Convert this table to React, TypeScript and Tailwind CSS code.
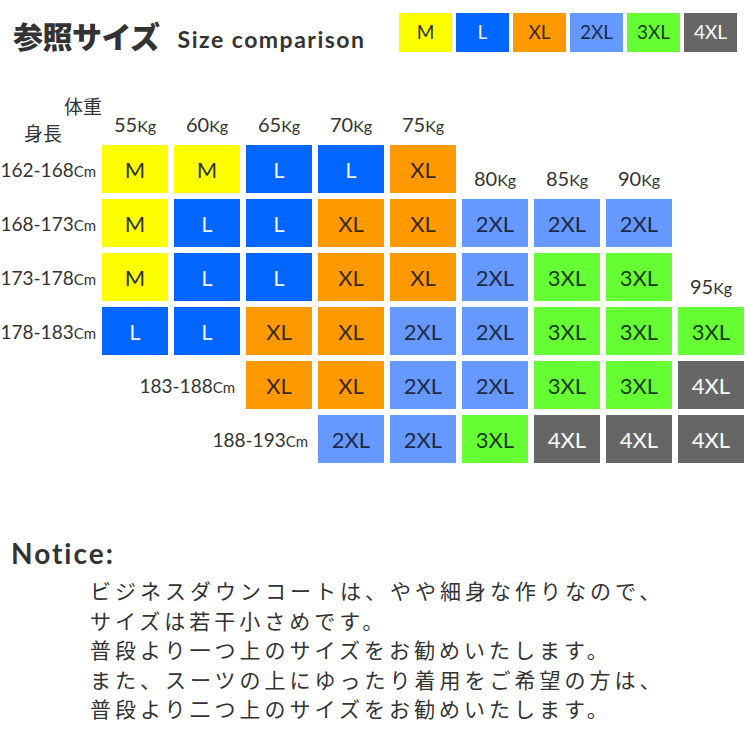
import React from 'react';

type Row = {
  label: string;
  labelCol: string;
  cells: string[];
  cellStart: number;
};

const SIZE_STYLE: Record<string, string> = {
  M: 'bg-[#ffff00] text-[#333333]',
  L: 'bg-[#0066ff] text-[#eef3ff]',
  XL: 'bg-[#ff9900] text-[#3a2a12]',
  '2XL': 'bg-[#6699ff] text-[#1e2a48]',
  '3XL': 'bg-[#66ff33] text-[#1c3a18]',
  '4XL': 'bg-[#666666] text-white',
};

// full class names so tailwind picks them up
const COL_START: Record<number, string> = {
  1: 'col-start-1',
  2: 'col-start-2',
  3: 'col-start-3',
  4: 'col-start-4',
  5: 'col-start-5',
  6: 'col-start-6',
  7: 'col-start-7',
  8: 'col-start-8',
  9: 'col-start-9',
  10: 'col-start-10',
};

const ROW_START: Record<number, string> = {
  1: 'row-start-1',
  2: 'row-start-2',
  3: 'row-start-3',
  4: 'row-start-4',
  5: 'row-start-5',
  6: 'row-start-6',
  7: 'row-start-7',
};

const rows: Row[] = [
  { label: '162-168', labelCol: 'col-start-1 col-span-1', cellStart: 2, cells: ['M', 'M', 'L', 'L', 'XL'] },
  { label: '168-173', labelCol: 'col-start-1 col-span-1', cellStart: 2, cells: ['M', 'L', 'L', 'XL', 'XL', '2XL', '2XL', '2XL'] },
  { label: '173-178', labelCol: 'col-start-1 col-span-1', cellStart: 2, cells: ['M', 'L', 'L', 'XL', 'XL', '2XL', '3XL', '3XL'] },
  { label: '178-183', labelCol: 'col-start-1 col-span-1', cellStart: 2, cells: ['L', 'L', 'XL', 'XL', '2XL', '2XL', '3XL', '3XL', '3XL'] },
  { label: '183-188', labelCol: 'col-start-1 col-span-3 pr-[5px]', cellStart: 4, cells: ['XL', 'XL', '2XL', '2XL', '3XL', '3XL', '4XL'] },
  { label: '188-193', labelCol: 'col-start-1 col-span-4 pr-[4px]', cellStart: 5, cells: ['2XL', '2XL', '3XL', '4XL', '4XL', '4XL'] },
];

// weight labels: [text, col, row]
const weights: [string, number, number][] = [
  ['55', 2, 1],
  ['60', 3, 1],
  ['65', 4, 1],
  ['70', 5, 1],
  ['75', 6, 1],
  ['80', 7, 2],
  ['85', 8, 2],
  ['90', 9, 2],
  ['95', 10, 4],
];

const legend = ['M', 'L', 'XL', '2XL', '3XL', '4XL'];

const noticeLines = [
  'ビジネスダウンコートは、やや細身な作りなので、',
  'サイズは若干小さめです。',
  '普段より一つ上のサイズをお勧めいたします。',
  'また、スーツの上にゆったり着用をご希望の方は、',
  '普段より二つ上のサイズをお勧めいたします。',
];

const SizeChart: React.FC = () => {
  return (
    <div className="w-[750px] h-[750px] overflow-hidden bg-white text-[#333333] font-['Lato','Noto_Sans_CJK_JP',sans-serif]">
      {/* header */}
      <div className="flex h-[52px] items-end justify-between pl-[13px] pr-[13px]">
        <div className="flex items-baseline pb-[1px]">
          <span className="font-['Noto_Sans_CJK_JP',sans-serif] text-[30px] font-black leading-none tracking-[-0.5px]">
            参照サイズ
          </span>
          <span className="ml-[18px] text-[23px] font-bold leading-none tracking-[1.5px]">Size comparison</span>
        </div>
        <div className="flex gap-[4px]">
          {legend.map((s) => (
            <div
              key={s}
              className={`flex h-[39px] w-[53px] items-center justify-center text-[19px] ${SIZE_STYLE[s]}`}
            >
              {s}
            </div>
          ))}
        </div>
      </div>

      {/* table */}
      <div className="mt-[39px] grid grid-cols-[96px_repeat(9,66px)] grid-rows-[repeat(7,48px)] gap-[6px]">
        <div className="col-start-1 row-start-1 flex flex-col font-['Noto_Sans_CJK_JP',sans-serif] text-[19px] leading-none">
          <span className="mt-[5px] mr-[-6px] self-end">体重</span>
          <span className="mt-[8px] ml-[24px]">身長</span>
        </div>

        {weights.map(([w, c, r]) => (
          <div key={w} className={`${COL_START[c]} ${ROW_START[r]} flex items-end justify-center pb-[5px]`}>
            <span className="text-[20px] leading-none">
              {w}
              <span className="text-[16px]">Kg</span>
            </span>
          </div>
        ))}

        {rows.map((row, i) => (
          <React.Fragment key={row.label}>
            <div className={`${row.labelCol} ${ROW_START[i + 2]} flex items-center justify-end`}>
              <span className="text-[19px] leading-none">
                {row.label}
                <span className="text-[15px]">Cm</span>
              </span>
            </div>
            {row.cells.map((s, j) => (
              <div
                key={j}
                className={`${COL_START[row.cellStart + j]} ${ROW_START[i + 2]} flex items-center justify-center text-[22px] ${SIZE_STYLE[s]}`}
              >
                {s}
              </div>
            ))}
          </React.Fragment>
        ))}
      </div>

      {/* notice */}
      <div className="mt-[76px] pl-[11px] text-[28px] font-bold leading-none tracking-[2px]">Notice:</div>
      <div className="mt-[9px] pl-[90px] font-['Noto_Sans_CJK_JP',sans-serif] text-[21px] leading-[29.5px] tracking-[4px]">
        {noticeLines.map((l) => (
          <div key={l}>{l}</div>
        ))}
      </div>
    </div>
  );
};

export default function App() {
  return <SizeChart />;
}
